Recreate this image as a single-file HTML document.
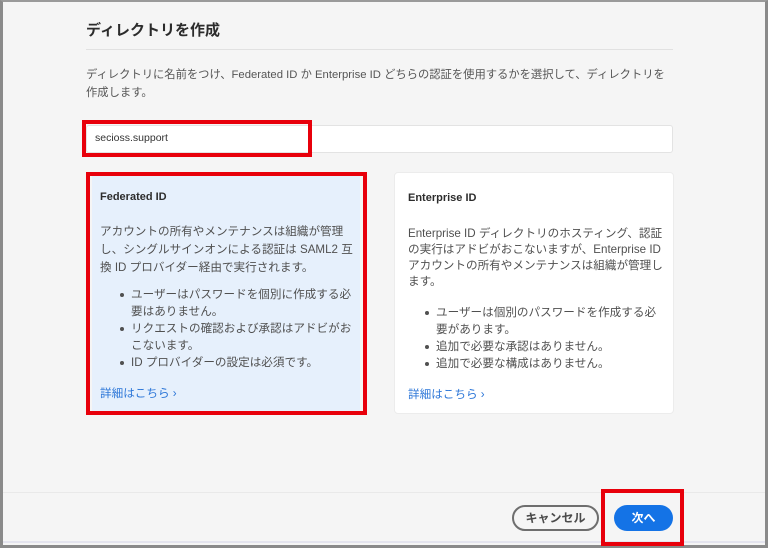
<!DOCTYPE html>
<html><head><meta charset="utf-8"><style>
*{margin:0;padding:0;box-sizing:border-box}
body{width:768px;height:548px;background:#f5f5f5;font-family:"Liberation Sans","Noto Sans CJK JP",sans-serif;color:#4b4b4b;position:relative;overflow:hidden}
.frame{position:absolute;left:0;top:0;width:768px;height:548px;border-left:3px solid #8a8a8a;border-top:2px solid #9a9a9a;border-right:3px solid #8a8a8a;border-bottom:3px solid #8a8a8a}
.abs{position:absolute;white-space:nowrap}
h1{position:absolute;left:86px;top:19px;font-size:15px;font-weight:bold;color:#2c2c2c}
.hr{position:absolute;left:86px;top:49px;width:587px;height:1px;background:#e1e1e1}
.desc{left:86px;top:66px;font-size:11.3px;line-height:18px;color:#555}
.input{position:absolute;left:86px;top:125px;width:587px;height:28px;background:#fff;border:1px solid #e3e3e3;border-radius:3px}
.red{position:absolute;border:4px solid #e8000b}
.card{position:absolute;top:172px;height:242px;border-radius:4px}
.card .t{position:absolute;left:8px;top:19px;font-size:11px;font-weight:bold;color:#2c2c2c;white-space:nowrap}
.card .b{position:absolute;left:8px;top:51px;font-size:11.6px;line-height:18px;color:#505050;white-space:nowrap}
.card ul{position:absolute;left:28px;top:114px;font-size:11.6px;line-height:17px;color:#505050;white-space:nowrap;list-style:none}
.card li{position:relative;padding-left:11px}
.card li:before{content:"";position:absolute;left:0;top:7px;width:4px;height:4px;border-radius:50%;background:#505050}
.card .l{position:absolute;left:8px;top:213px;font-size:11.6px;color:#2d77d8;white-space:nowrap}
.btn{position:absolute;top:505px;height:26px;border-radius:13px;font-size:12px;font-weight:bold;text-align:center;line-height:22px}
</style></head><body>
<div class="frame"></div>
<h1>ディレクトリを作成</h1>
<div class="hr"></div>
<div class="abs desc">ディレクトリに名前をつけ、Federated ID か Enterprise ID どちらの認証を使用するかを選択して、ディレクトリを<br>作成します。</div>
<div class="input"></div>
<div class="abs" style="left:95px;top:132px;font-size:10.5px;color:#333">secioss.support</div>
<div class="red" style="left:82px;top:120px;width:230px;height:37px"></div>

<div class="card" style="left:92px;width:268px;background:#e6f0fc">
<div class="t">Federated ID</div>
<div class="b">アカウントの所有やメンテナンスは組織が管理<br>し、シングルサインオンによる認証は SAML2 互<br>換 ID プロバイダー経由で実行されます。</div>
<ul><li>ユーザーはパスワードを個別に作成する必<br>要はありません。</li><li>リクエストの確認および承認はアドビがお<br>こないます。</li><li>ID プロバイダーの設定は必須です。</li></ul>
<div class="l">詳細はこちら ›</div>
</div>
<div class="red" style="left:86px;top:172px;width:281px;height:243px"></div>

<div class="card" style="left:394px;width:280px;background:#fff;border:1px solid #ececec">
<div class="t" style="left:13px">Enterprise ID</div>
<div class="b" style="left:13px;top:53px;line-height:16px">Enterprise ID ディレクトリのホスティング、認証<br>の実行はアドビがおこないますが、Enterprise ID<br>アカウントの所有やメンテナンスは組織が管理し<br>ます。</div>
<ul style="top:131px;left:30px"><li>ユーザーは個別のパスワードを作成する必<br>要があります。</li><li>追加で必要な承認はありません。</li><li>追加で必要な構成はありません。</li></ul>
<div class="l" style="left:13px">詳細はこちら ›</div>
</div>

<div style="position:absolute;left:3px;top:492px;width:762px;height:1px;background:#e9e9e9"></div>
<div style="position:absolute;left:3px;top:541px;width:762px;height:2px;background:#e4e4ee"></div>
<div class="btn" style="left:512px;width:87px;border:2px solid #6e6e6e;color:#4b4b4b;background:#f5f5f5">キャンセル</div>
<div class="btn" style="left:614px;width:59px;background:#1473e6;color:#fff;line-height:26px">次へ</div>
<div class="red" style="left:601px;top:489px;width:83px;height:57px"></div>
</body></html>
